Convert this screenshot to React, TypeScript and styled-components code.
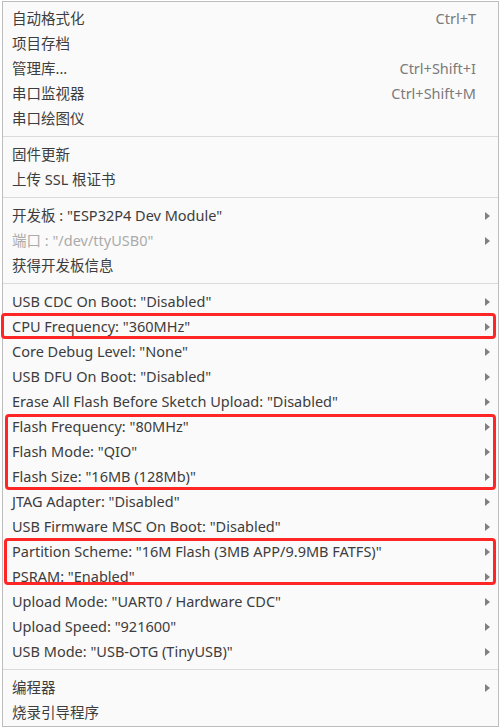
import React from "react";
import styled, { createGlobalStyle } from "styled-components";

const Global = createGlobalStyle`
  html, body { margin: 0; padding: 0; background: #ffffff; }
  body { font-family: "Noto Sans", "Noto Sans CJK SC", sans-serif; }
`;

const Page = styled.div`
  width: 500px;
  height: 728px;
  padding: 1px 0 0 2px;
  box-sizing: border-box;
  overflow: hidden;
`;

const Menu = styled.div`
  width: 497px;
  box-sizing: border-box;
  background: #fafafa;
  border: 1px solid #bdbdbd;
  padding: 4px 0 1px;
  display: flex;
  flex-direction: column;
  font-family: "Noto Sans", "Noto Sans CJK SC", sans-serif;
  font-size: 14.5px;
  color: #3d3d3d;
`;

const Row = styled.div<{ $disabled?: boolean }>`
  height: 25px;
  box-sizing: border-box;
  padding: 0 7px 2px 9px;
  display: flex;
  align-items: center;
  color: ${(p) => (p.$disabled ? "#ababab" : "#3d3d3d")};
  white-space: nowrap;
`;

const Label = styled.span`
  flex: 1;
`;

const Shortcut = styled.span`
  color: #7b7b7b;
  font-size: 14.5px;
  padding-right: 15px;
`;

const Arrow = styled.span`
  width: 0;
  height: 0;
  margin-top: 2px;
  border-top: 4.5px solid transparent;
  border-bottom: 4.5px solid transparent;
  border-left: 5px solid #808080;
  margin-right: 1px;
`;

const Separator = styled.div`
  height: 11px;
  display: flex;
  align-items: center;
  &::before {
    content: "";
    flex: 1;
    height: 1px;
    background: #dadada;
  }
`;

const Highlight = styled.div<{ $t: number; $b: number; $l: number; $r: number }>`
  position: relative;
  &::after {
    content: "";
    position: absolute;
    top: ${(p) => p.$t}px;
    bottom: ${(p) => p.$b}px;
    left: ${(p) => p.$l}px;
    right: ${(p) => p.$r}px;
    border: 3px solid #ff2626;
    border-radius: 4px;
    pointer-events: none;
  }
`;

type Item = { label: string; shortcut?: string; sub?: boolean; disabled?: boolean };

const MenuRow = ({ label, shortcut, sub, disabled }: Item) => (
  <Row $disabled={disabled}>
    <Label>{label}</Label>
    {shortcut && <Shortcut>{shortcut}</Shortcut>}
    {sub && <Arrow />}
  </Row>
);

export default function App() {
  return (
    <Page>
      <Global />
      <Menu>
        <MenuRow label="自动格式化" shortcut="Ctrl+T" />
        <MenuRow label="项目存档" />
        <MenuRow label="管理库..." shortcut="Ctrl+Shift+I" />
        <MenuRow label="串口监视器" shortcut="Ctrl+Shift+M" />
        <MenuRow label="串口绘图仪" />
        <Separator />
        <MenuRow label="固件更新" />
        <MenuRow label="上传 SSL 根证书" />
        <Separator />
        <MenuRow label={'开发板 : "ESP32P4 Dev Module"'} sub />
        <MenuRow label={'端口 : "/dev/ttyUSB0"'} sub disabled />
        <MenuRow label="获得开发板信息" />
        <Separator />
        <MenuRow label={'USB CDC On Boot: "Disabled"'} sub />
        <Highlight $t={-1} $b={0} $l={-2} $r={2}>
          <MenuRow label={'CPU Frequency: "360MHz"'} sub />
        </Highlight>
        <MenuRow label={'Core Debug Level: "None"'} sub />
        <MenuRow label={'USB DFU On Boot: "Disabled"'} sub />
        <MenuRow label={'Erase All Flash Before Sketch Upload: "Disabled"'} sub />
        <Highlight $t={0} $b={-1} $l={2} $r={2}>
          <MenuRow label={'Flash Frequency: "80MHz"'} sub />
          <MenuRow label={'Flash Mode: "QIO"'} sub />
          <MenuRow label={'Flash Size: "16MB (128Mb)"'} sub />
        </Highlight>
        <MenuRow label={'JTAG Adapter: "Disabled"'} sub />
        <MenuRow label={'USB Firmware MSC On Boot: "Disabled"'} sub />
        <Highlight $t={-1} $b={4} $l={1} $r={2}>
          <MenuRow label={'Partition Scheme: "16M Flash (3MB APP/9.9MB FATFS)"'} sub />
          <MenuRow label={'PSRAM: "Enabled"'} sub />
        </Highlight>
        <MenuRow label={'Upload Mode: "UART0 / Hardware CDC"'} sub />
        <MenuRow label={'Upload Speed: "921600"'} sub />
        <MenuRow label={'USB Mode: "USB-OTG (TinyUSB)"'} sub />
        <Separator />
        <MenuRow label="编程器" sub />
        <MenuRow label="烧录引导程序" />
      </Menu>
    </Page>
  );
}
